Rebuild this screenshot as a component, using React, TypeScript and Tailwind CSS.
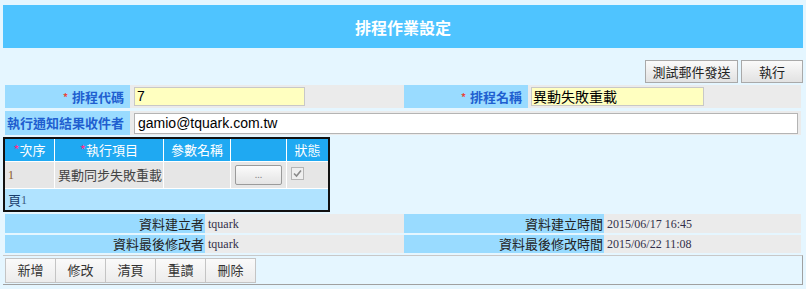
import React from "react";

const cjk = "'Noto Sans CJK TC', 'Noto Sans CJK SC', sans-serif";
const serif = "'Liberation Serif', 'Noto Sans CJK TC', serif";

function Btn({ children, className = "" }: { children: React.ReactNode; className?: string }) {
  return (
    <div
      className={
        "flex items-center justify-center border border-[#a9a9a9] bg-gradient-to-b from-[#fafafa] to-[#e2e2e2] text-[13px] text-[#222] " +
        className
      }
    >
      {children}
    </div>
  );
}

export default function App() {
  return (
    <div
      className="w-[806px] h-[289px] bg-[#e5f6ff] px-[3px] pt-[5px] overflow-hidden"
      style={{ fontFamily: cjk }}
    >
      {/* header */}
      <div className="h-[43px] bg-[#4fc4ff] flex items-center justify-center text-white font-bold text-[16px]">
        排程作業設定
      </div>

      {/* top buttons */}
      <div className="flex justify-end gap-[3px] mt-[12px] pr-[0px]">
        <Btn className="w-[93px] h-[23px]">測試郵件發送</Btn>
        <Btn className="w-[62px] h-[23px]">執行</Btn>
      </div>

      {/* form rows */}
      <div className="px-[2px] mt-[2px] flex flex-col gap-[3px]">
        <div className="flex h-[23px] bg-[#ebebeb]">
          <div className="w-[125px] bg-[#99dbff] flex items-center justify-end pr-[6px] text-[13px] font-bold text-[#1f5fd0]">
            <span className="text-[#e8463c] text-[10px] mr-[4px]">*</span>排程代碼
          </div>
          <div className="w-[274px] flex items-center pl-[4px]">
            <div className="w-[171px] h-[19px] bg-[#ffffc0] border border-[#c8c8c8] flex items-center px-[2px] text-[14px] text-black" style={{ fontFamily: "'Liberation Sans', sans-serif" }}>
              7
            </div>
          </div>
          <div className="w-[124px] bg-[#99dbff] flex items-center justify-end pr-[6px] text-[13px] font-bold text-[#1f5fd0]">
            <span className="text-[#e8463c] text-[10px] mr-[4px]">*</span>排程名稱
          </div>
          <div className="flex-1 flex items-center pl-[3px]">
            <div className="w-[173px] h-[19px] bg-[#ffffc0] border border-[#c8c8c8] flex items-center px-[1px] text-[14px] text-black">
              異動失敗重載
            </div>
          </div>
        </div>
        <div className="flex h-[24px] bg-[#ebebeb]">
          <div className="w-[125px] bg-[#99dbff] flex items-center justify-end pr-[6px] text-[13px] font-bold text-[#1f5fd0]">
            執行通知結果收件者
          </div>
          <div className="flex-1 flex items-center pl-[4px] pr-[3px]">
            <div className="w-full h-[21px] bg-white border border-[#b4b4b4] flex items-center px-[3px] text-[14px] text-black" style={{ fontFamily: "'Liberation Sans', sans-serif" }}>
              gamio@tquark.com.tw
            </div>
          </div>
        </div>
      </div>

      {/* grid */}
      <div className="mt-[2px] w-[327px] border-2 border-[#111] bg-white text-[13px]">
        <div className="grid grid-cols-[49px_108px_66px_55px_1fr] gap-x-[1px] gap-y-[1px] bg-white">
          <div className="h-[22px] bg-[#1fa9f2] text-white flex items-center justify-center">
            <span className="text-[#ff2f8e]">*</span>次序
          </div>
          <div className="h-[22px] bg-[#1fa9f2] text-white flex items-center justify-center">
            <span className="text-[#ff2f8e]">*</span>執行項目
          </div>
          <div className="h-[22px] bg-[#1fa9f2] text-white flex items-center justify-center">參數名稱</div>
          <div className="h-[22px] bg-[#1fa9f2]"></div>
          <div className="h-[22px] bg-[#1fa9f2] text-white flex items-center justify-center">狀態</div>

          <div className="h-[26px] bg-[#e6e6e6] flex items-center pl-[3px] text-[12px] text-[#8b5a2b]" style={{ fontFamily: serif }}>1</div>
          <div className="h-[26px] bg-[#e6e6e6] flex items-center pl-[3px] text-[#444]">異動同步失敗重載</div>
          <div className="h-[26px] bg-[#e6e6e6]"></div>
          <div className="h-[26px] bg-[#e6e6e6] flex items-center justify-center">
            <div className="w-[47px] h-[20px] border border-[#9a9a9a] rounded-[2px] bg-gradient-to-b from-[#fbfbfb] to-[#e4e4e4] flex items-center justify-center text-[9px] text-[#888]">
              ...
            </div>
          </div>
          <div className="h-[26px] bg-[#e6e6e6] flex items-start pt-[5px] pl-[4px]">
            <div className="w-[13px] h-[13px] border border-[#b5b5b5] bg-[#efefef] flex items-center justify-center">
              <svg width="9" height="9" viewBox="0 0 9 9">
                <path d="M1 4.5 L3.5 7 L8 1.5" stroke="#8a8a8a" strokeWidth="1.6" fill="none" />
              </svg>
            </div>
          </div>
        </div>
        <div className="h-[21px] mt-[1px] bg-[#b0e3ff] flex items-center pl-[3px] text-[13px] text-[#1a3d6b]">
          頁<span className="text-[12px] text-[#3a5a80]" style={{ fontFamily: serif }}>1</span>
        </div>
      </div>

      {/* info rows */}
      <div className="px-[2px] mt-[2px] flex flex-col gap-[2px] text-[13px]">
        <div className="flex h-[19px]">
          <div className="w-[200px] bg-[#99dbff] flex items-center justify-end pr-[1px] text-[#222]">資料建立者</div>
          <div className="w-[199px] bg-[#ebebeb] flex items-center pl-[3px] text-[12px] text-[#33304a]" style={{ fontFamily: serif }}>tquark</div>
          <div className="w-[200px] bg-[#99dbff] flex items-center justify-end pr-[1px] text-[#222]">資料建立時間</div>
          <div className="flex-1 bg-[#ebebeb] flex items-center pl-[3px] text-[12px] text-[#33304a]" style={{ fontFamily: serif }}>2015/06/17 16:45</div>
        </div>
        <div className="flex h-[18px]">
          <div className="w-[200px] bg-[#99dbff] flex items-center justify-end pr-[1px] text-[#222]">資料最後修改者</div>
          <div className="w-[199px] bg-[#ebebeb] flex items-center pl-[3px] text-[12px] text-[#33304a]" style={{ fontFamily: serif }}>tquark</div>
          <div className="w-[200px] bg-[#99dbff] flex items-center justify-end pr-[1px] text-[#222]">資料最後修改時間</div>
          <div className="flex-1 bg-[#ebebeb] flex items-center pl-[3px] text-[12px] text-[#33304a]" style={{ fontFamily: serif }}>2015/06/22 11:08</div>
        </div>
      </div>

      {/* bottom buttons */}
      <div className="mt-[2px] h-[30px] border-t border-[#c8c8c8] border-b border-b-[#a0a0a0] border-r border-r-[#a0a0a0] flex items-center pl-[2px]">
        {["新增", "修改", "清頁", "重讀", "刪除"].map((t) => (
          <div
            key={t}
            className="w-[51px] h-[25px] border border-[#c4c4c4] -ml-[1px] first:ml-0 bg-gradient-to-b from-[#fafafa] to-[#ececec] flex items-center justify-center text-[13px] text-[#333]"
          >
            {t}
          </div>
        ))}
      </div>
    </div>
  );
}
